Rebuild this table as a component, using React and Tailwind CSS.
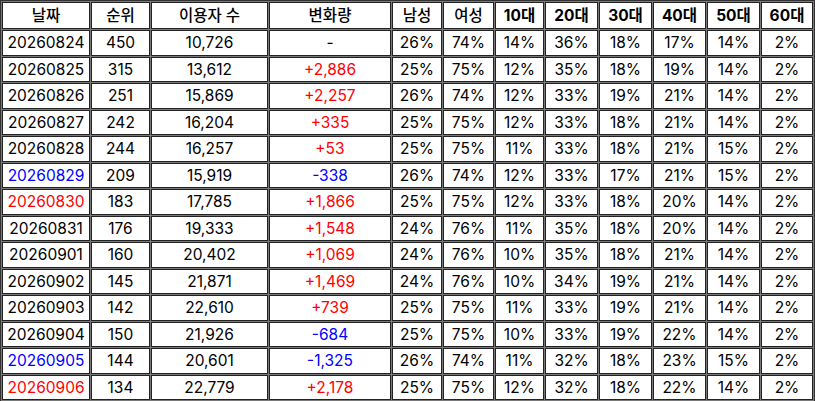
import React from "react";

const rows = [
  ["20260824", "450", "10,726", "-", "26%", "74%", "14%", "36%", "18%", "17%", "14%", "2%"],
  ["20260825", "315", "13,612", "+2,886", "25%", "75%", "12%", "35%", "18%", "19%", "14%", "2%"],
  ["20260826", "251", "15,869", "+2,257", "26%", "74%", "12%", "33%", "19%", "21%", "14%", "2%"],
  ["20260827", "242", "16,204", "+335", "25%", "75%", "12%", "33%", "18%", "21%", "14%", "2%"],
  ["20260828", "244", "16,257", "+53", "25%", "75%", "11%", "33%", "18%", "21%", "15%", "2%"],
  ["20260829", "209", "15,919", "-338", "26%", "74%", "12%", "33%", "17%", "21%", "15%", "2%"],
  ["20260830", "183", "17,785", "+1,866", "25%", "75%", "12%", "33%", "18%", "20%", "14%", "2%"],
  ["20260831", "176", "19,333", "+1,548", "24%", "76%", "11%", "35%", "18%", "20%", "14%", "2%"],
  ["20260901", "160", "20,402", "+1,069", "24%", "76%", "10%", "35%", "18%", "21%", "14%", "2%"],
  ["20260902", "145", "21,871", "+1,469", "24%", "76%", "10%", "34%", "19%", "21%", "14%", "2%"],
  ["20260903", "142", "22,610", "+739", "25%", "75%", "11%", "33%", "19%", "21%", "14%", "2%"],
  ["20260904", "150", "21,926", "-684", "25%", "75%", "10%", "33%", "19%", "22%", "14%", "2%"],
  ["20260905", "144", "20,601", "-1,325", "26%", "74%", "11%", "32%", "18%", "23%", "15%", "2%"],
  ["20260906", "134", "22,779", "+2,178", "25%", "75%", "12%", "32%", "18%", "22%", "14%", "2%"],
];

const dateColor = {
  "20260829": "text-[#0000ff]",
  "20260830": "text-[#ff0000]",
  "20260905": "text-[#0000ff]",
  "20260906": "text-[#ff0000]",
};

const widths = [88, 59, 117, 122, 50, 51, 49, 53, 53, 53, 53, 52];

const headers = ["날짜", "순위", "이용자 수", "변화량", "남성", "여성", "10대", "20대", "30대", "40대", "50대", "60대"];

function changeColor(v) {
  if (v.startsWith("+")) return "text-[#ff0000]";
  if (v.startsWith("-") && v.length > 1) return "text-[#0000ff]";
  return "text-black";
}

export default function App() {
  return (
    <div className="w-[815px] h-[401px] bg-white overflow-hidden" style={{ fontFamily: "Inter, 'Noto Sans CJK KR', sans-serif" }}>
      <table className="table-fixed w-[815px] border-separate border-spacing-[1px] bg-[#7a7a7a] border border-[#333] text-[15.5px] text-black leading-none">
        <colgroup>
          {widths.map((w, i) => (
            <col key={i} style={{ width: w }} />
          ))}
        </colgroup>
        <thead>
          <tr>
            {headers.map((h, i) => (
              <th
                key={h}
                className={`h-[27px] p-0 bg-white border border-[#222] text-center ${i >= 6 ? "font-bold" : "font-medium"}`}
              >
                {h}
              </th>
            ))}
          </tr>
        </thead>
        <tbody>
          {rows.map((r) => (
            <tr key={r[0]}>
              {r.map((c, i) => {
                let color = "text-black";
                if (i === 0) color = dateColor[c] || "text-black";
                if (i === 3) color = changeColor(c);
                return (
                  <td key={i} className={`h-[25.5px] p-0 bg-white border border-[#222] text-center ${color}`}>
                    {c}
                  </td>
                );
              })}
            </tr>
          ))}
        </tbody>
      </table>
    </div>
  );
}
